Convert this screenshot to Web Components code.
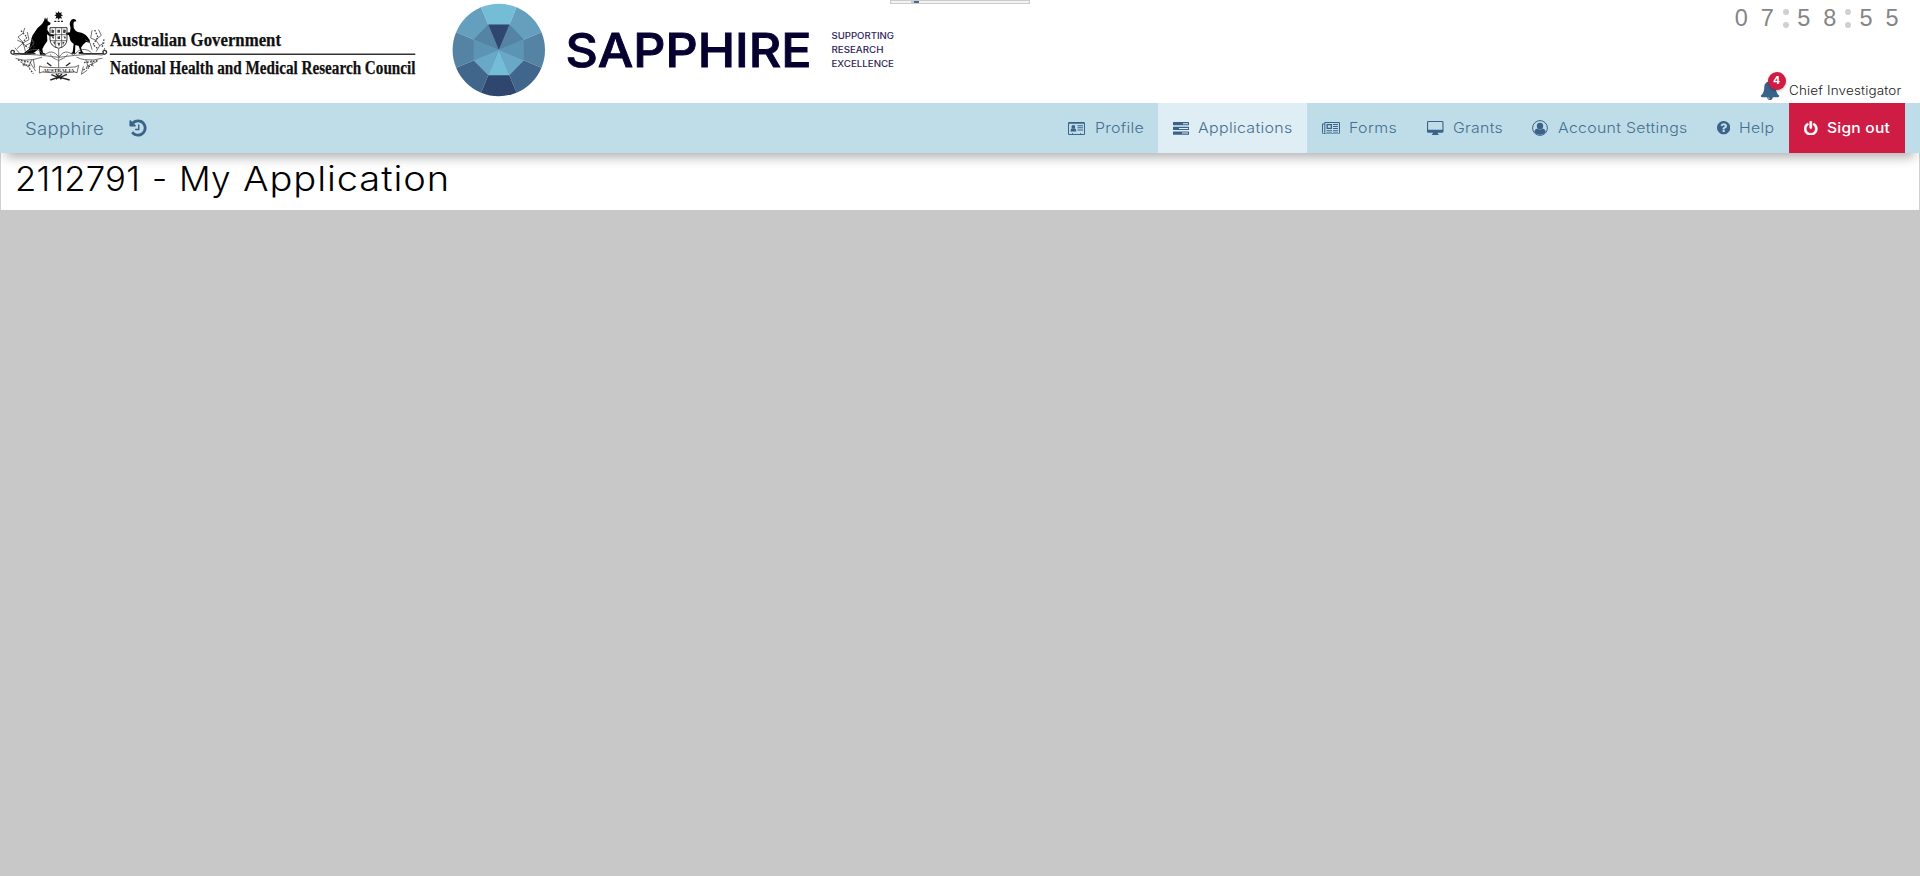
<!DOCTYPE html>
<html lang="en"><head><meta charset="utf-8"><title>Sapphire</title>
<style>html,body{margin:0;height:100%;background:#c8c8c8;font-family:Inter,"Open Sans",sans-serif}</style></head>
<body><sapphire-app></sapphire-app>
<script>
const define=(name,html,setup)=>customElements.define(name,class extends HTMLElement{
  connectedCallback(){
    if(this.shadowRoot)return;
    this.attachShadow({mode:'open'}).innerHTML=typeof html==='function'?html(this):html;
    if(setup)setup(this);
  }
});

/* Text set to a given measure: part of the difference goes to glyph width, the rest to tracking. */
define('tracked-text',`<style>:host{display:block;white-space:pre;flex:none}span{display:inline-block;transform-origin:0 50%}</style><span><slot></slot></span>`,el=>{
  const s=el.shadowRoot.querySelector('span'),w=+el.getAttribute('measure'),n=el.textContent.length;
  el.style.width=w+'px';
  const nat=s.getBoundingClientRect().width,k=Math.pow(w/nat,.7);
  s.style.letterSpacing=((w/k-nat)/n)+'px';
  s.style.transform=`scaleX(${k})`;
});

const icons={
 history:['0 0 1792 1792','<path d="M1664 896q0 156-61 298t-164 245-245 164-298 61q-172 0-327-72.5t-264-204.5q-7-10-6.5-22.5t8.5-20.5l137-138q10-9 25-9 16 2 23 12 73 95 179 147t225 52q104 0 198.5-40.5t163.5-109.5 109.5-163.5 40.5-198.5-40.5-198.5-109.5-163.5-163.5-109.5-198.5-40.5q-98 0-188 35.5t-160 101.500l137 138q31 30 14 69-17 40-59 40h-448q-26 0-45-19t-19-45v-448q0-42 40-59 39-17 69 14l130 129q107-101 244.5-156.5t284.5-55.5q156 0 298 61t245 164 164 245 61 298zm-640-288v448q0 14-9 23t-23 9h-320q-14 0-23-9t-9-23v-64q0-14 9-23t23-9h224v-352q0-14 9-23t23-9h64q14 0 23 9t9 23z"/>'],
 bell:['0 0 1792 1792','<path d="M912 1696q0-16-16-16-59 0-101.5-42.5t-42.5-101.5q0-16-16-16t-16 16q0 73 51.5 124.5t124.5 51.5q16 0 16-16zm816-288q0 52-38 90t-90 38h-448q0 106-75 181t-181 75-181-75-75-181h-448q-52 0-90-38t-38-90q50-42 91-88t85-119.5 74.5-158.5 50-206 19.5-260q0-152 117-282.5t307-158.5q-8-19-8-39 0-40 28-68t68-28 68 28 28 68q0 20-8 39 190 28 307 158.5t117 282.5q0 139 19.5 260t50 206 74.5 158.5 85 119.5 91 88z"/>'],
 power:['128 0 1536 1664','<path d="M1664 896q0 156-61 298t-164 245-245 164-298 61-298-61-245-164-164-245-61-298q0-182 80.5-343t226.5-270q43-32 95.5-25t83.5 50q32 42 24.5 94.5t-49.5 84.5q-98 74-151.5 181t-53.5 228q0 104 40.5 198.5t109.5 163.5 163.5 109.5 198.5 40.5 198.5-40.5 163.5-109.5 109.5-163.5 40.5-198.5q0-121-53.5-228t-151.5-181q-42-32-49.5-84.5t24.5-94.5q31-43 84-50t95 25q146 109 226.5 270t80.5 343zm-640-768v640q0 52-38 90t-90 38-90-38-38-90v-640q0-52 38-90t90-38 90 38 38 90z" stroke="currentColor" stroke-width="50"/>'],
 help:['128 128 1536 1536','<path d="M1024 1376v-192q0-14-9-23t-23-9h-192q-14 0-23 9t-9 23v192q0 14 9 23t23 9h192q14 0 23-9t9-23zm256-672q0-88-55.5-163t-138.5-116-170-41q-243 0-371 213-15 24 8 42l132 100q7 6 19 6 16 0 25-12 53-68 86-92 34-24 86-24 48 0 85.5 26t37.5 59q0 38-20 61t-68 45q-63 28-115.5 86.5t-52.5 125.5v36q0 14 9 23t23 9h192q14 0 23-9t9-23q0-19 21.5-49.5t54.5-49.5q32-18 49-28.5t46-35 44.5-48 28-60.5 12.5-81zm384 192q0 209-103 385.5t-279.5 279.5-385.5 103-385.5-103-279.5-279.5-103-385.5 103-385.5 279.5-279.5 385.5-103 385.5 103 279.5 279.5 103 385.5z"/>'],
 profile:['0 0 17 13','<path fill-rule="evenodd" d="M1.2 0h14.6A1.2 1.2 0 0 1 17 1.200v10.600A1.200 1.200 0 0 1 15.800 13H1.200A1.200 1.200 0 0 1 0 11.800V1.200A1.200 1.200 0 0 1 1.200 0zM1 1.800v9.900q0 .3.3.3H4v-.8h1V12h7v-.8h1v.8h2.700q.3 0 .3-.3V1.800z"/><circle cx="5.300" cy="4.800" r="1.900"/><path d="M2.500 9.500q0-3 1.400-3.300 1.400.9 2.800 0 1.600.3 1.600 3.300zM9.500 3.200H15v1H9.500zM9.500 5.300H15v1H9.500zM9.500 7.600H15v1H9.500z"/>'],
 apps:['0 0 16 13','<path fill-rule="evenodd" d="M.5 0h15q.5 0 .5.5v2.300q0 .5-.5.5H.5Q0 3.300 0 2.800V.5Q0 0 .5 0zM10 1.200v1h5v-1zM.5 4.700h15q.5 0 .5.500v2.300q0 .5-.5.5H.5Q0 8 0 7.500V5.200q0-.5.5-.5zM6 5.900v1h9v-1zM.5 9.400h15q.5 0 .5.5v2.400q0 .5-.5.5H.5q-.5 0-.5-.5V9.900q0-.5.5-.5zM9 10.600v1h6v-1z"/>'],
 forms:['0 0 18 12.500','<path fill="none" stroke="currentColor" d="M2.800.5h14.700v10.300q0 1.200-1.200 1.200H1.700Q.5 12 .5 10.800V1.900h2.300m0-1.400v10.300q0 1-.9 1.200"/><path fill-rule="evenodd" d="M4.500 2h5.500v5H4.500zm1.300 1.200v2.600h2.900V3.200zM11 2h5v1h-5zM11 4h5v1h-5zM11 6h5v1h-5zM4.500 8h5.500v.8H4.500zM4.500 9.700h5.500v.8H4.500zM11 8h5v.8h-5zM11 9.700h5v.8h-5z"/>'],
 grants:['0 0 16.500 14','<path fill-rule="evenodd" d="M1.400 0h13.700q1.400 0 1.400 1.400v9q0 1.400-1.400 1.400h-4.300v1q1 .3 1 1.200H4.800q0-.9 1-1.200v-1H1.400Q0 11.800 0 10.400v-9Q0 0 1.400 0zm.1 1q-.4 0-.4.4v7.300h14.300V1.400q0-.4-.4-.4z"/>'],
 account:['0 0 16 16','<circle cx="8" cy="8" r="7.400" fill="none" stroke="currentColor" stroke-width="1"/><circle cx="8" cy="6" r="3.200"/><path d="M2.300 11.600q.5-2.600 3-3 2.700 1.800 5.400 0 2.500.4 3 3Q11.700 14.800 8 14.800t-5.700-3.200z"/>']
};
define('ui-icon',el=>{const i=icons[el.getAttribute('name')];
 return `<style>:host{display:block;flex:none}svg{display:block;width:100%;height:100%;fill:currentColor}</style><svg viewBox="${i[0]}">${i[1]}</svg>`});

define('coat-of-arms',`<style>:host{display:block;width:120px;height:100px;flex:none}svg{display:block}</style>
<svg width="120" height="100" viewBox="0 0 360 300" fill="#111">
<path d="M176 33l3 6 7-2-3 6 6 3-6 3 3 7-7-2-3 6-3-6-7 2 3-7-6-3 6-3-3-6 7 2z"/>
<path d="M163 64h27" stroke="#222" stroke-width="4" stroke-dasharray="6 4"/>
<path d="M132 62l3-10 3 7 4-7 1 11 9 6-2 5-7 3-1 13 8 12 12 2 1 4-14 1-8-6 1 20-8 11-7 13 2 11 8 3v3h-17l-3-18-12 10-11 7-14 2-22-1 15-6 14-11 5-20 5-20 15-22 14-13z" fill="#000"/>
<path d="M209 76q0-17 10-19 9-1 10 7l-7 1q-3 6-1 17 4 13 16 15 16 2 25 13 9 9 8 18l-12-2-9 8-6 9 5 14 8 4h-20v-4l6-2-6-17-10-3-1 23 5 3h-19l7-5 3-24q-12-8-12-20l-3-7-8-2 1-5 11-1q4-13-1-24z" fill="#000"/>
<g fill="none" stroke="#333" stroke-width="3"><path d="M150 83h51v34q0 22-25 28-26-6-26-28z"/><path d="M150 104h51M167 83v60M185 83v60M150 122h50" stroke-width="2"/></g>
<path d="M155 88l8 3-2 9-7-2zM172 89h8v9h-8zM190 88l8 2-2 10-7-2zM154 108l9 2-3 8zM172 110l8-2v9h-7zM190 109l8 1-3 8zM159 126l6-2v11zM172 128h9l-4 12zM187 126l7-1-5 10z" fill="#444"/>
<g fill="none" stroke="#555" stroke-width="2.500" stroke-linecap="round">
<path d="M105 161H45c-10 5-16-4-10-9 6-3 10 2 7 6M247 161h60c10 5 17-4 10-9-6-3-10 2-7 6" stroke="#333" stroke-width="4"/>
<path d="M45 165c40-5 90 2 131 7 40-5 90-12 131-7M80 158c5-10 28-13 38-6l16 14c12-14 30-14 43 6 12-20 28-20 43-6l16-14c15-8 30-2 38 6M152 164c4 12 15 12 24 18 8-6 20-6 26-18M176 148v88"/>
<path d="M52 145l18-17-16-17 15-11 5-15M76 154l-6-26 17-9-5-22M90 145l12-17-8-14M57 158l-12-14M69 128l-16-7M76 137l16-8M289 154l10-17-12-17 17-14-8-16M276 148l-6-20-13-8M298 137l15-8M288 121l-16-7 4-22M309 158l5-13"/>
<path d="M48 176q23 8 50 3 16-4 27-7M62 186l26 16M76 184l-4 14M96 180l-12 20M100 178l4 24M306 175q-25 8-52 4-14-2-23-7M290 185l-30 14M275 182l4 16M258 180l8 26M92 190l14 22M250 200l-6 23 17-12"/>
</g>
<g fill="none" stroke="#444" stroke-width="4" stroke-dasharray="5 4"><path d="M63 92l18 20-15 18 19 14M96 122l6 20M284 90l10 22-15 22 13 11M312 118l-6 26M54 180l39 7M68 194l27 3M252 188l43-6M250 210l27-16M88 205l12 16"/></g>
<path d="M119 198l8 3q49 5 98 0l11-5-5 22-7-2q-48 7-97 0l-9 3z" fill="#fff" stroke="#222" stroke-width="2"/>
<text x="129" y="215" font-family="Liberation Serif" font-weight="700" font-size="14" textLength="94" lengthAdjust="spacingAndGlyphs">AUSTRALIA</text>
<path d="M141 188l13 10M211 188l-13 10M154 224l20 8-23 8M201 223l-21 9 29 8M168 222l16 16M186 222l-18 16" fill="none" stroke="#222" stroke-width="4"/>
</svg>`);

define('nhmrc-name',`<style>:host{display:block;width:310px;height:100px;flex:none}svg{display:block;overflow:visible}</style>
<svg width="310" height="100" font-family="Liberation Serif" font-weight="700" fill="#111" stroke="#111" stroke-width=".25">
<text x="0" y="46" font-size="18.500" textLength="171" lengthAdjust="spacingAndGlyphs">Australian Government</text>
<path d="M-.2 53.500h305.500v1.500H-.2z" fill="#333" stroke="none"/>
<text x="0" y="74.300" font-size="18.500" textLength="305.500" lengthAdjust="spacingAndGlyphs">National Health and Medical Research Council</text></svg>`);

define('sapphire-logo',`<style>:host{display:block;width:450px;height:100px;flex:none}svg{display:block}</style>
<svg width="450" height="100" viewBox="450 0 450 100" font-family="Inter">
<clipPath id="c"><circle cx="498.800" cy="50" r="46.200"/></clipPath>
<g clip-path="url(#c)">
<path fill="#74bdd7" d="M498.800 50L478 0h41.600z"/><path fill="#64a0be" d="M498.800 50L519.600 0H550v28.800z"/><path fill="#64a0be" d="M498.800 50L478 0h-30v28.800z"/>
<path fill="#5483a4" d="M498.800 50L550 28.800v42.400z"/><path fill="#5483a4" d="M498.800 50L448 28.800v42.400z"/>
<path fill="#41668b" d="M498.800 50L550 71.200V100h-30.400z"/><path fill="#41668b" d="M498.800 50L448 71.200V100h30z"/><path fill="#2f466f" d="M498.800 50L519.600 100H478z"/>
</g>
<g><path fill="#5483a4" d="M509.500 24.600L523.800 39.500 498.800 50zM488.200 24.600L473.600 39.500 498.800 50z"/>
<path fill="#5c95b3" d="M523.800 39.500v21L498.800 50zM473.600 39.500v21L498.800 50z"/>
<path fill="#69a8c6" d="M523.800 60.500L509.500 75.200 498.800 50zM473.600 60.500L488.200 75.200 498.800 50z"/>
<path fill="#74bdd7" d="M488.200 75.200h21.300L498.800 50z"/><path fill="#2f466f" d="M488.200 24.600h21.300L498.800 50z"/></g>
<text x="565.500" y="67" font-size="47" font-weight="500" stroke="#060030" stroke-width=".9" fill="#060030" textLength="246" lengthAdjust="spacingAndGlyphs">SAPPHIRE</text>
<g font-size="8.300" fill="#2e2558" font-weight="500"><text x="831.500" y="38.500" textLength="62.500" lengthAdjust="spacingAndGlyphs">SUPPORTING</text><text x="831.500" y="52.700" textLength="52" lengthAdjust="spacingAndGlyphs">RESEARCH</text><text x="831.500" y="67" textLength="62.500" lengthAdjust="spacingAndGlyphs">EXCELLENCE</text></g>
</svg>`);

define('session-clock',`<style>:host{display:flex;align-items:center;height:27px;font:23.500px/27px "Liberation Sans",sans-serif;color:#858585}
span{width:26px;text-align:center}i{width:10.300px;height:19px;display:flex;flex-direction:column;justify-content:space-between;align-items:center}
i:before,i:after{content:"";width:6px;height:6px;border-radius:50%;background:#d0d0d0}</style>
<span>0</span><span>7</span><i></i><span>5</span><span>8</span><i></i><span>5</span><span>5</span>`);

define('user-badge',`<style>:host{display:flex;height:24px;align-items:flex-end;font-size:12.700px;line-height:16px;font-weight:300;color:#222}
.b{position:relative;width:20px;height:20px;color:#3b6288;margin:0 9px 0 0}ui-icon{width:20px;height:20px}tracked-text{margin-bottom:1px}
.n{position:absolute;left:8px;top:-8px;width:18px;height:18px;border-radius:50%;background:#ce1c45;color:#fff;font-size:10.500px;font-weight:700;line-height:18px;text-align:center;box-shadow:0 1px 3px rgba(0,0,0,.3)}</style>
<div class="b"><ui-icon name="bell"></ui-icon><div class="n">4</div></div><tracked-text measure="112.500">Chief Investigator</tracked-text>`);

define('nav-item',el=>`<style>:host{display:flex;box-sizing:border-box;height:50px;padding-left:15px;align-items:center;width:${el.getAttribute('w')}px;font-size:14.600px;font-weight:350;color:#47708f}
:host([active]){background:#dfedf4}:host([primary]){background:#ce1c45;color:#fff;font-weight:500}
ui-icon{width:${el.getAttribute('iw')}px;height:${el.getAttribute('ih')}px;margin-right:${el.getAttribute('gap')}px;color:#3b6288}:host([primary]) ui-icon{color:#fff}</style>
<ui-icon name="${el.getAttribute('icon')}"></ui-icon><tracked-text measure="${el.getAttribute('measure')}">${el.textContent}</tracked-text>`);

define('main-nav',`<style>:host{display:flex;height:50px;background:#bfdde8;box-shadow:0 10px 12px -6px rgba(0,0,0,.32);position:relative;align-items:center;color:#47708f;padding-right:15px}
.brand{font-size:17.200px;font-weight:350;margin:0 24px 0 25px}.items{display:flex;margin-left:auto}ui-icon{width:20px;height:20px;color:#3b6288}</style>
<tracked-text class="brand" measure="79">Sapphire</tracked-text><ui-icon name="history"></ui-icon>
<div class="items">
<nav-item icon="profile" w="105" iw="17" ih="13" gap="9.500" measure="49">Profile</nav-item>
<nav-item active icon="apps" w="149" iw="16" ih="13" gap="9" measure="94.500">Applications</nav-item>
<nav-item icon="forms" w="105" iw="18" ih="12.500" gap="9" measure="48">Forms</nav-item>
<nav-item icon="grants" w="105" iw="16.500" ih="14" gap="9" measure="50">Grants</nav-item>
<nav-item icon="account" w="185" iw="16" ih="16" gap="9.500" measure="129.500">Account Settings</nav-item>
<nav-item icon="help" w="87" iw="13.300" ih="13.300" gap="9" measure="35.500">Help</nav-item>
<nav-item primary icon="power" w="116" iw="13.500" ih="14.500" gap="9" measure="63">Sign out</nav-item>
</div>`);

define('page-title',el=>{
 const widths=el.getAttribute('measures').split(' ');
 return `<style>:host{display:block;box-sizing:border-box;height:57px;background:#fff;border:1px solid #d0d0d0;border-width:0 1px;padding:5px 0 0 13.500px}
h1{margin:0;font-size:34px;line-height:42px;font-weight:300;color:#000;display:flex;gap:12px}</style><h1>${el.textContent.split(' ').map((t,i)=>`<tracked-text measure="${widths[i]}">${t}</tracked-text>`).join('')}</h1>`;
});

define('sapphire-app',`<style>:host{display:block;position:relative}
header{height:103px;background:#fff;display:flex}.right{margin-left:auto;display:flex;flex-direction:column;align-items:flex-end;justify-content:space-between;padding:5px 19px 3px 0;box-sizing:border-box}
coat-of-arms{margin-right:-10px}nhmrc-name{margin-right:30px}session-clock{margin-right:-4px}
.tip{position:absolute;left:890px;top:0;width:140px;height:4px;box-sizing:border-box;border:1px solid #ccc;background:#f3f3f3}.tip:after{content:"";display:block;margin-left:20px;width:5px;height:2px;background:#3f6e92;border-left:3px solid #ccc}</style>
<header><coat-of-arms></coat-of-arms><nhmrc-name></nhmrc-name><sapphire-logo></sapphire-logo>
<div class="right"><session-clock></session-clock><user-badge></user-badge></div></header>
<div class="tip"></div>
<main-nav></main-nav>
<page-title measures="125 15 52 207">2112791 - My Application</page-title>`);
</script></body></html>
